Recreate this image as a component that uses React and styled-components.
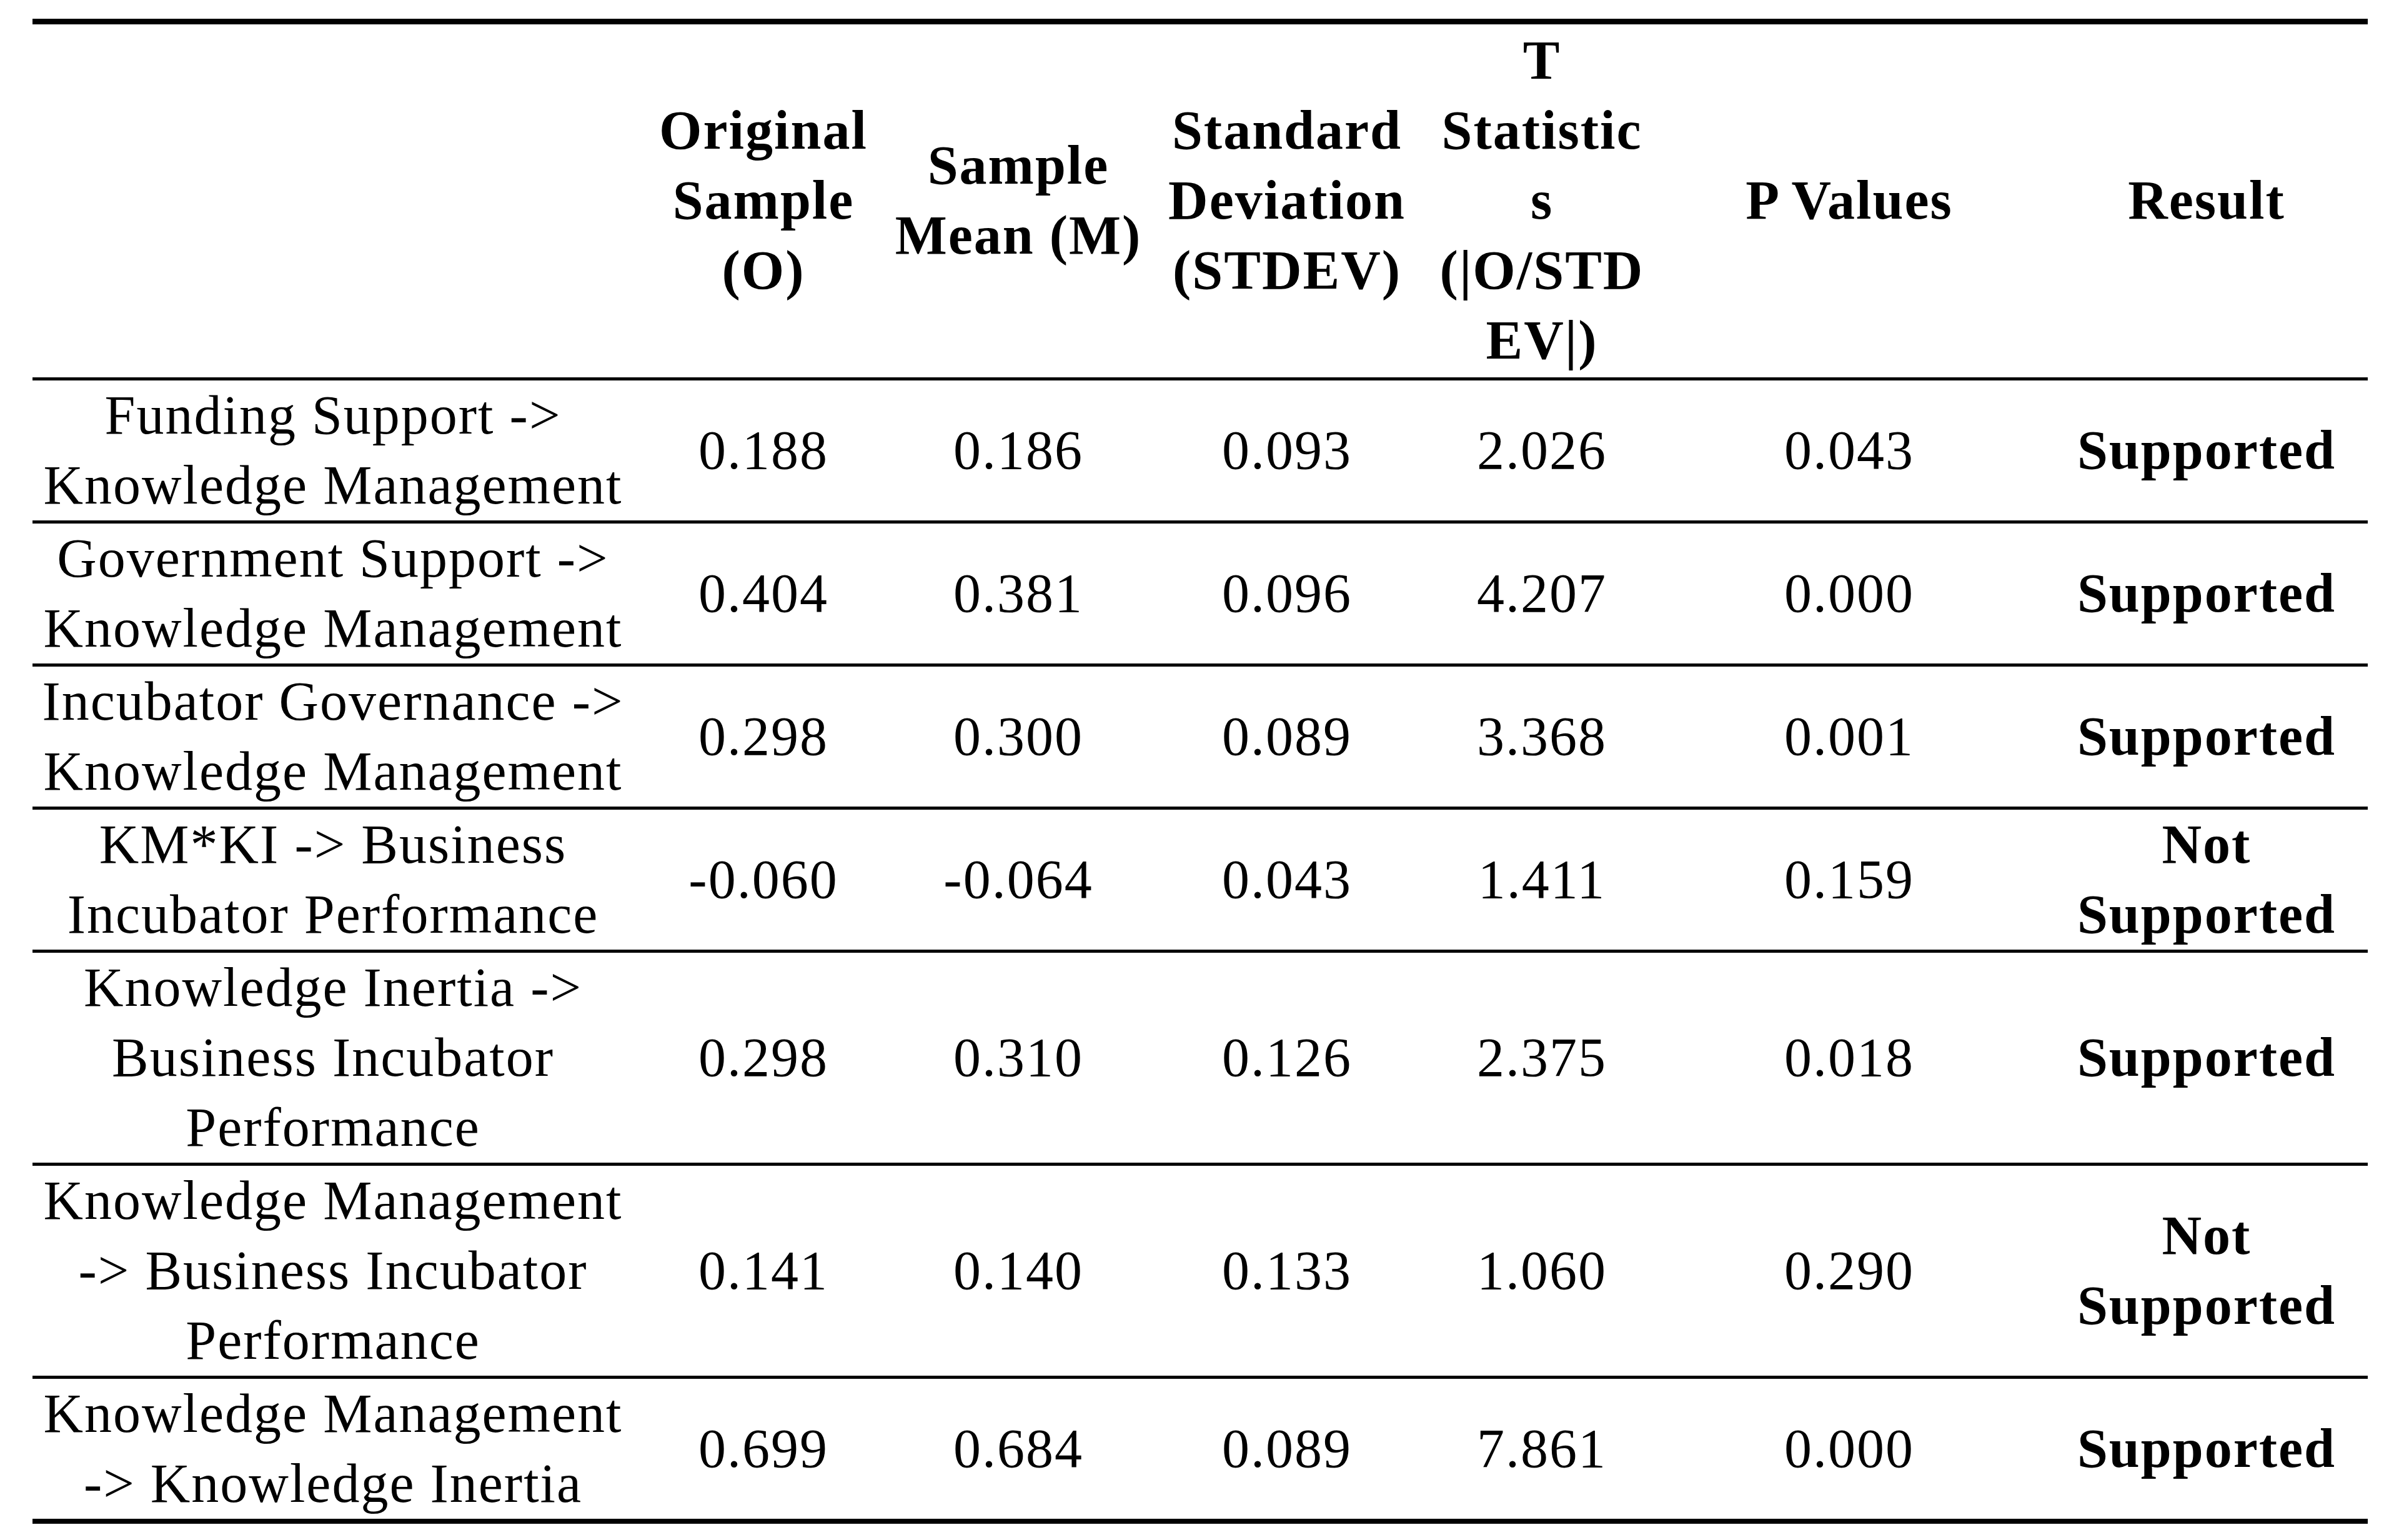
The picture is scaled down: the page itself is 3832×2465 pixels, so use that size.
import React from "react";
import styled, { createGlobalStyle } from "styled-components";

const GlobalStyle = createGlobalStyle`
  html, body {
    margin: 0;
    padding: 0;
    background: #fff;
  }
`;

const Page = styled.div`
  padding: 30px 42px 30px 52px;
  background: #fff;
  font-family: "Liberation Serif", "Times New Roman", serif;
  color: #000;
`;

const Table = styled.table`
  width: 3738px;
  table-layout: fixed;
  border-collapse: collapse;
  border-top: 9px solid #000;
  border-bottom: 8px solid #000;
`;

const HeadCell = styled.th`
  padding: 2px 0 3px;
  font-size: 88px;
  line-height: 112px;
  letter-spacing: 2px;
  font-weight: 700;
  text-align: center;
  vertical-align: middle;
  white-space: nowrap;
  border-bottom: 5px solid #000;
`;

const Row = styled.tr`
  & + & td {
    border-top: 5px solid #000;
  }
`;

const Cell = styled.td`
  padding: 0;
  font-size: 88px;
  line-height: 112px;
  letter-spacing: 2px;
  text-align: center;
  vertical-align: middle;
  white-space: nowrap;
  font-weight: ${({ $bold }) => ($bold ? 700 : 400)};
`;

const Line = styled.span`
  display: block;
`;

const widths = [962, 416, 400, 460, 356, 628, 516];

const headers = [
  [],
  ["Original", "Sample", "(O)"],
  ["Sample", "Mean (M)"],
  ["Standard", "Deviation", "(STDEV)"],
  ["T", "Statistic", "s", "(|O/STD", "EV|)"],
  ["P Values"],
  ["Result"],
];

const rows = [
  {
    path: ["Funding Support ->", "Knowledge Management"],
    values: ["0.188", "0.186", "0.093", "2.026", "0.043"],
    result: ["Supported"],
  },
  {
    path: ["Government Support ->", "Knowledge Management"],
    values: ["0.404", "0.381", "0.096", "4.207", "0.000"],
    result: ["Supported"],
  },
  {
    path: ["Incubator Governance ->", "Knowledge Management"],
    values: ["0.298", "0.300", "0.089", "3.368", "0.001"],
    result: ["Supported"],
  },
  {
    path: ["KM*KI -> Business", "Incubator Performance"],
    values: ["-0.060", "-0.064", "0.043", "1.411", "0.159"],
    result: ["Not", "Supported"],
  },
  {
    path: ["Knowledge Inertia ->", "Business Incubator", "Performance"],
    values: ["0.298", "0.310", "0.126", "2.375", "0.018"],
    result: ["Supported"],
  },
  {
    path: ["Knowledge Management", "-> Business Incubator", "Performance"],
    values: ["0.141", "0.140", "0.133", "1.060", "0.290"],
    result: ["Not", "Supported"],
  },
  {
    path: ["Knowledge Management", "-> Knowledge Inertia"],
    values: ["0.699", "0.684", "0.089", "7.861", "0.000"],
    result: ["Supported"],
  },
];

const Lines = ({ items }) =>
  items.map((t, i) => <Line key={i}>{t}</Line>);

export default function App() {
  return (
    <>
      <GlobalStyle />
      <Page>
        <Table>
          <colgroup>
            {widths.map((w, i) => (
              <col key={i} style={{ width: w }} />
            ))}
          </colgroup>
          <thead>
            <tr>
              {headers.map((h, i) => (
                <HeadCell key={i}>
                  <Lines items={h} />
                </HeadCell>
              ))}
            </tr>
          </thead>
          <tbody>
            {rows.map((r, i) => (
              <Row key={i}>
                <Cell>
                  <Lines items={r.path} />
                </Cell>
                {r.values.map((v, j) => (
                  <Cell key={j}>{v}</Cell>
                ))}
                <Cell $bold>
                  <Lines items={r.result} />
                </Cell>
              </Row>
            ))}
          </tbody>
        </Table>
      </Page>
    </>
  );
}
